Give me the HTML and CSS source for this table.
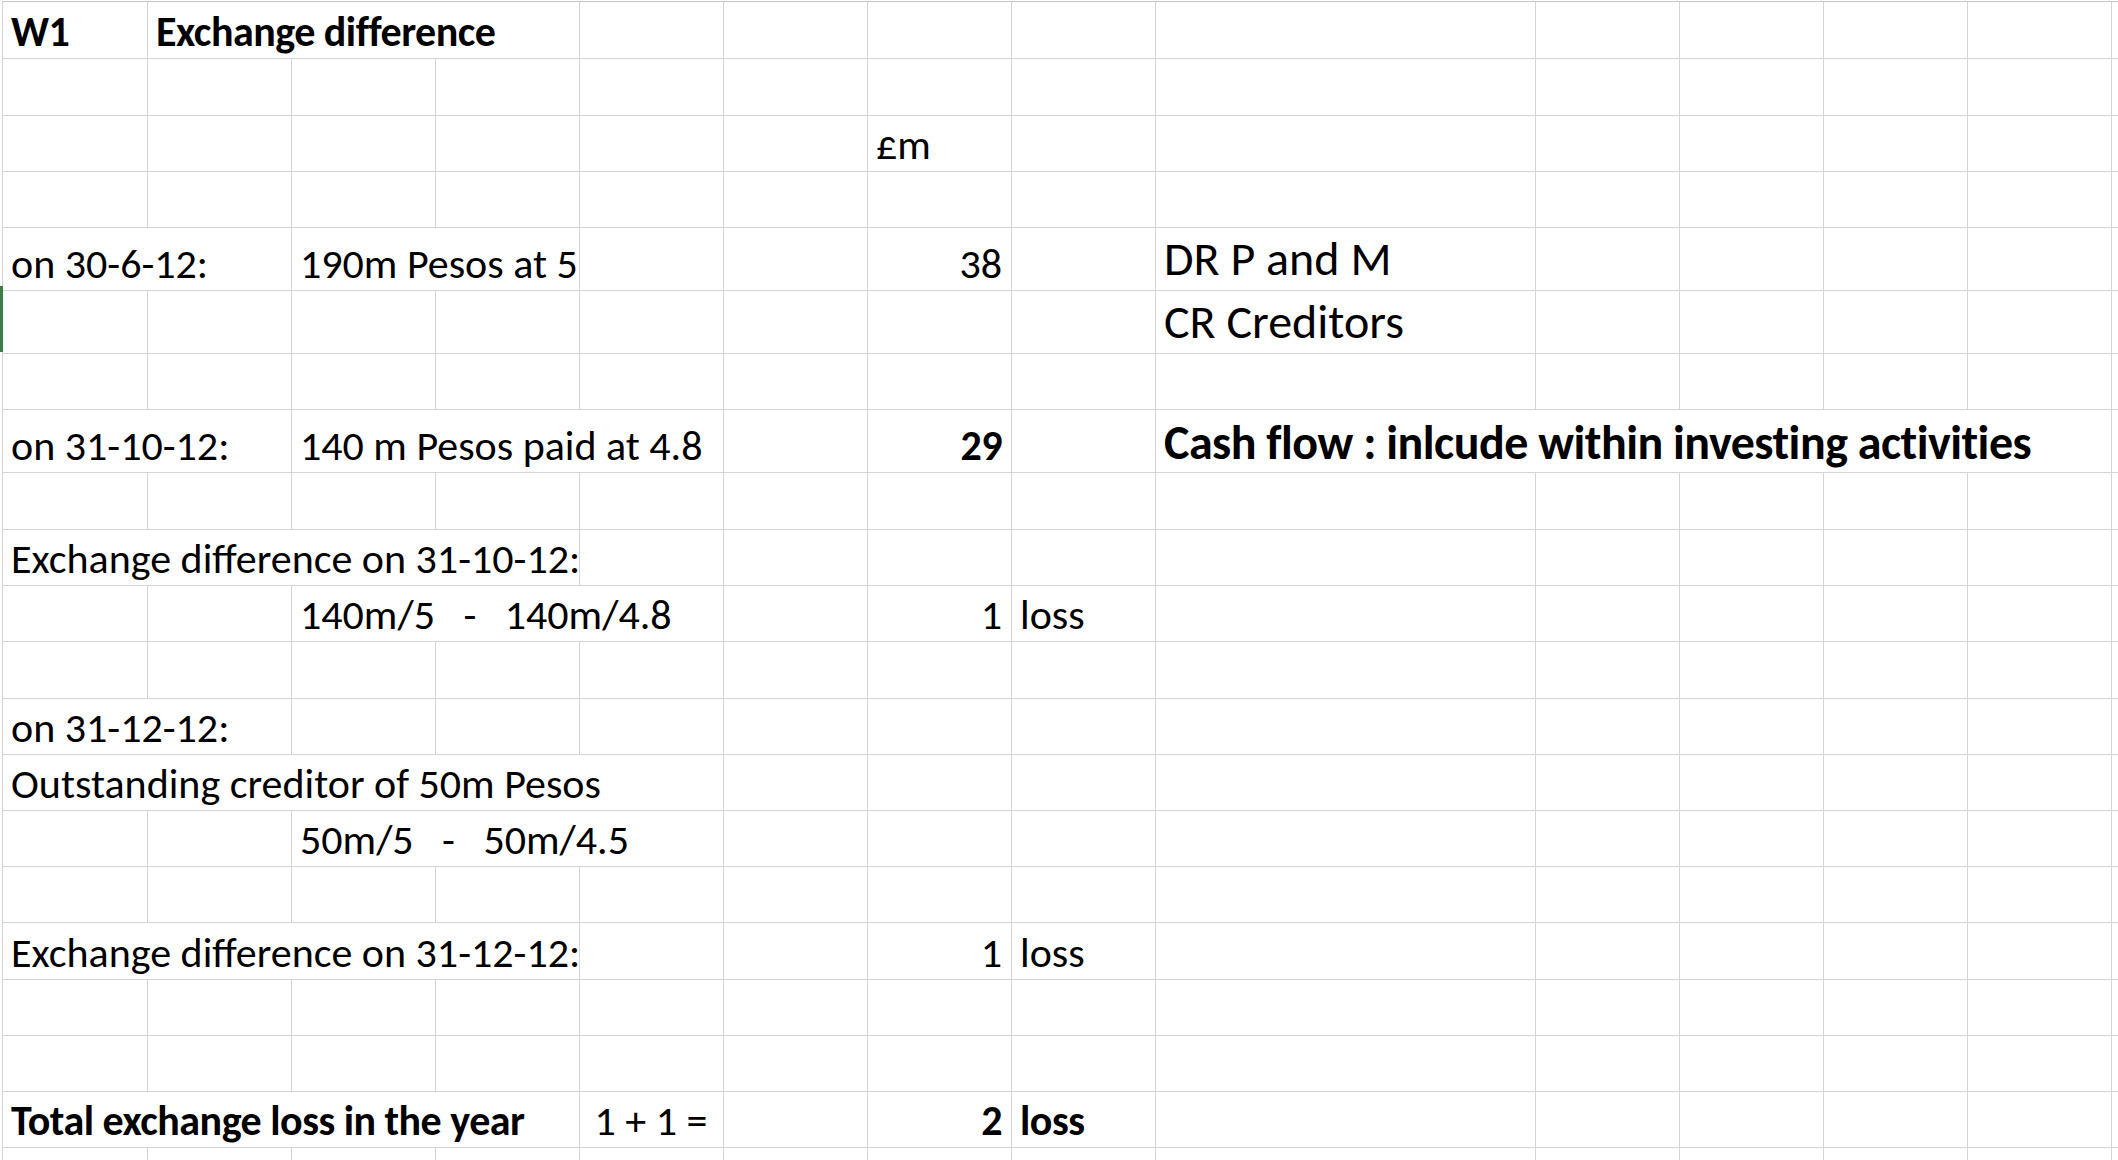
FILE: index.html
```html
<!DOCTYPE html>
<html lang="en">
<head>
<meta charset="utf-8">
<title>W1 Exchange difference</title>
<link rel="stylesheet" href="styles.css">
</head>
<body>
<div class="sheet">
  <div class="row h57">
    <div class="b">W1</div><div class="b s3">Exchange difference</div>
    <div></div><div></div><div></div><div></div><div></div><div></div><div></div><div></div><div></div><div></div>
  </div>
  <div class="row h57">
    <div></div><div></div><div></div><div></div><div></div><div></div><div></div><div></div><div></div><div></div><div></div><div></div><div></div><div></div>
  </div>
  <div class="row h56">
    <div></div><div></div><div></div><div></div><div></div><div></div>
    <div>£m</div>
    <div></div><div></div><div></div><div></div><div></div><div></div><div></div>
  </div>
  <div class="row h56">
    <div></div><div></div><div></div><div></div><div></div><div></div><div></div><div></div><div></div><div></div><div></div><div></div><div></div><div></div>
  </div>
  <div class="row h63">
    <div class="s2">on 30-6-12:</div><div class="s2">190m Pesos at 5</div>
    <div></div><div></div>
    <div class="num">38</div>
    <div></div>
    <div class="f48 note">DR P and M</div>
    <div></div><div></div><div></div><div></div><div></div>
  </div>
  <div class="row h63">
    <div class="sel"></div>
    <div></div><div></div><div></div><div></div><div></div><div></div><div></div>
    <div class="f48 note">CR Creditors</div>
    <div></div><div></div><div></div><div></div><div></div>
  </div>
  <div class="row h56">
    <div></div><div></div><div></div><div></div><div></div><div></div><div></div><div></div><div></div><div></div><div></div><div></div><div></div><div></div>
  </div>
  <div class="row h63">
    <div class="s2">on 31-10-12:</div><div class="s3">140 m Pesos paid at 4.8</div>
    <div></div>
    <div class="num b">29</div>
    <div></div>
    <div class="s5 b f48">Cash flow : inlcude within investing activities</div>
    <div></div>
  </div>
  <div class="row h57">
    <div></div><div></div><div></div><div></div><div></div><div></div><div></div><div></div><div></div><div></div><div></div><div></div><div></div><div></div>
  </div>
  <div class="row h56">
    <div class="s4">Exchange difference on 31-10-12:</div>
    <div></div><div></div><div></div><div></div><div></div><div></div><div></div><div></div><div></div><div></div>
  </div>
  <div class="row h56">
    <div></div><div></div>
    <div class="s3">140m/5   -   140m/4.8</div>
    <div></div>
    <div class="num">1</div>
    <div>loss</div>
    <div></div><div></div><div></div><div></div><div></div><div></div>
  </div>
  <div class="row h57">
    <div></div><div></div><div></div><div></div><div></div><div></div><div></div><div></div><div></div><div></div><div></div><div></div><div></div><div></div>
  </div>
  <div class="row h56">
    <div class="s2">on 31-12-12:</div>
    <div></div><div></div><div></div><div></div><div></div><div></div><div></div><div></div><div></div><div></div><div></div><div></div>
  </div>
  <div class="row h56">
    <div class="s5">Outstanding creditor of 50m Pesos</div>
    <div></div><div></div><div></div><div></div><div></div><div></div><div></div><div></div><div></div>
  </div>
  <div class="row h56">
    <div></div><div></div>
    <div class="s3">50m/5   -   50m/4.5</div>
    <div></div><div></div><div></div>
    <div></div><div></div><div></div><div></div><div></div><div></div>
  </div>
  <div class="row h56">
    <div></div><div></div><div></div><div></div><div></div><div></div><div></div><div></div><div></div><div></div><div></div><div></div><div></div><div></div>
  </div>
  <div class="row h57">
    <div class="s4">Exchange difference on 31-12-12:</div>
    <div></div><div></div>
    <div class="num">1</div>
    <div>loss</div>
    <div></div><div></div><div></div><div></div><div></div><div></div>
  </div>
  <div class="row h56">
    <div></div><div></div><div></div><div></div><div></div><div></div><div></div><div></div><div></div><div></div><div></div><div></div><div></div><div></div>
  </div>
  <div class="row h56">
    <div></div><div></div><div></div><div></div><div></div><div></div><div></div><div></div><div></div><div></div><div></div><div></div><div></div><div></div>
  </div>
  <div class="row h56">
    <div class="s4 b">Total exchange loss in the year</div>
    <div class="ctr">1 + 1 =</div>
    <div></div>
    <div class="num b">2</div>
    <div class="b">loss</div>
    <div></div><div></div><div></div><div></div><div></div><div></div>
  </div>
  <div class="row h56">
    <div></div><div></div><div></div><div></div><div></div><div></div><div></div><div></div><div></div><div></div><div></div><div></div><div></div><div></div>
  </div>
</div>
</body>
</html>
```

FILE: styles.css
```css
html, body {
  margin: 0;
  padding: 0;
  background: #ffffff;
}

body {
  width: 2118px;
  height: 1160px;
  overflow: hidden;
  font-family: "Carlito", "Lato", sans-serif;
  color: #000000;
}

.sheet {
  margin: 1px 0 0 2px;
  border-top: 1px solid #c4c4c4;
  border-left: 1px solid #d4d4d4;
  width: max-content;
}

.row {
  display: grid;
  grid-template-columns: 145px repeat(7, 144px) 380px repeat(5, 144px);
}

.h56 { height: 56px; }
.h57 { height: 57px; }
.h63 { height: 63px; }

.row > div {
  box-sizing: border-box;
  min-width: 0;
  display: flex;
  align-items: flex-end;
  padding: 0 9px 5px 8px;
  border-right: 1px solid #d4d4d4;
  border-bottom: 1px solid #d4d4d4;
  font-size: 42px;
  line-height: 42px;
  white-space: pre;
}

.s2 { grid-column: span 2; }
.s3 { grid-column: span 3; }
.s4 { grid-column: span 4; }
.s5 { grid-column: span 5; }

.row > .num { justify-content: flex-end; }
.row > .ctr { justify-content: center; }

.b {
  font-weight: 700;
  letter-spacing: -0.5px;
}

.row > .f48 {
  font-size: 48px;
  line-height: 48px;
}

.row > .note {
  padding-bottom: 7px;
}

.sel { position: relative; }

.sel::before {
  content: "";
  position: absolute;
  left: -3px;
  top: -5px;
  bottom: 1px;
  width: 3px;
  background: #3c7d48;
}
```
